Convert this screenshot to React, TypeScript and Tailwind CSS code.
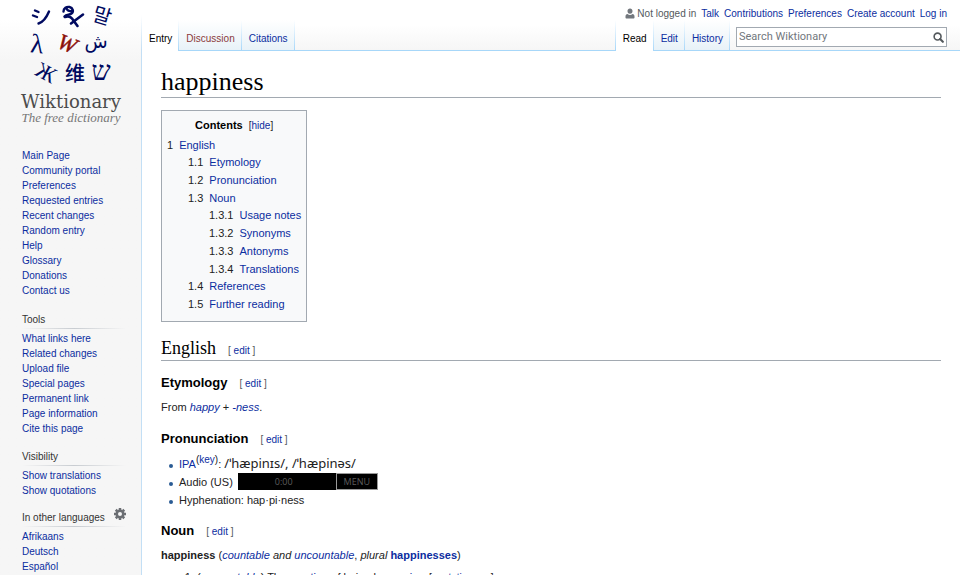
import React from "react";

const link = "text-[#0b2da0] no-underline hover:underline";

function A({ children, className = "" }: { children: React.ReactNode; className?: string }) {
  return (
    <a href="#" className={`${link} ${className}`}>
      {children}
    </a>
  );
}

function Logo() {
  const navy = "#000a60";
  return (
    <a href="#" aria-label="Wiktionary, the free dictionary" className="block pl-px text-center">
      <svg viewBox="0 0 140 93" className="block h-[93px] w-full" fill={navy} textAnchor="middle">
        <g fill="none" stroke={navy} strokeLinecap="round">
          <path d="M34 10.500l3.500 1.500M32 15.500l4 1.500" strokeWidth="2.400" />
          <path d="M37.500 23.500c5-1.500 8-6 10.500-12" strokeWidth="2.400" />
          <path d="M62.500 11.500c0-3.500 3-5 6-4.500 3.500.7 4.500 4.500 2 6.500-2 1.700-5 .5-7 3M65.500 8.500c1 2 2.500 3 5 2.500" strokeWidth="2.400" />
          <path d="M64 17c3.500-1.500 5.500-.5 7 1.500l5.500 7.500" strokeWidth="2.600" />
          <path d="M70 23.500l12-9" strokeWidth="2.600" />
        </g>
        <text transform="translate(101 16) rotate(17)" y="7" fontSize="20" className="font-['Noto_Sans_CJK_KR',sans-serif]">말</text>
        <text transform="translate(36 45) rotate(6)" y="8" fontSize="27" className="font-['Liberation_Serif',serif]">λ</text>
        <text transform="translate(66 44) rotate(22)" y="7" fontSize="22" fontStyle="italic" stroke="#8c1109" strokeWidth="0.500" fill="#8c1109" className="font-['Liberation_Serif',serif]">W</text>
        <text x="95" y="48" fontSize="19" className="font-['DejaVu_Sans',sans-serif]">ش</text>
        <text transform="translate(45 73) rotate(28)" y="7" fontSize="22" className="font-['Liberation_Serif',serif]">Ж</text>
        <text x="74" y="81" fontSize="20" fontWeight="500" className="font-['Noto_Sans_CJK_SC',sans-serif]">维</text>
        <text x="100" y="80" fontSize="27" className="font-['Liberation_Serif',serif]">ש</text>
      </svg>
      <span className="block font-['DejaVu_Serif',serif] text-[18px] leading-[18px] text-[#4c4c4c]">Wiktionary</span>
      <span className="block font-['Liberation_Serif',serif] text-[13px] italic leading-[14px] text-[#777]">The free dictionary</span>
    </a>
  );
}

function GearIcon() {
  return (
    <svg viewBox="0 0 24 24" className="h-3 w-3" fill="none" stroke="#6b6e73">
      <circle cx="12" cy="12" r="6.500" strokeWidth="5" />
      <path d="M12 0v4M12 20v4M0 12h4M20 12h4M3.500 3.500l3 3M17.500 17.500l3 3M20.500 3.500l-3 3M6.500 17.500l-3 3" strokeWidth="5" />
    </svg>
  );
}

function NavGroup({ title, items, gear = false, className = "" }: { title?: string; items: string[]; gear?: boolean; className?: string }) {
  return (
    <nav aria-label={title ?? "Navigation"} className={className}>
      {title && (
        <div className="mb-[2px] w-[104px]">
          <div className="flex h-4 items-center justify-between">
            <h3 className="text-[10px] leading-[16px] text-[#333]">{title}</h3>
            {gear && (
              <button type="button" aria-label="Language settings" className="mb-2">
                <GearIcon />
              </button>
            )}
          </div>
          <div className="h-px bg-linear-to-r from-[#f6f6f6] via-[#c8ccd1] to-[#f6f6f6]" />
        </div>
      )}
      <ul>
        {items.map((t) => (
          <li key={t} className="text-[10px] leading-[15px]">
            <A>{t}</A>
          </li>
        ))}
      </ul>
    </nav>
  );
}

function Tab({ label, active = false, missing = false }: { label: string; active?: boolean; missing?: boolean }) {
  return (
    <li className={`relative px-[7px] pt-[13px] text-[10px] leading-[12px] ${active ? "-mb-px bg-white" : "bg-linear-to-b from-white to-[#e8f2f8]"}`}>
      <a href="#" className={active ? "text-black" : missing ? "text-[#8b3a3a]" : "text-[#0b2da0]"}>
        {label}
      </a>
      <span className="absolute bottom-0 right-0 top-0 w-px bg-linear-to-b from-white to-[#a7d7f9]" />
    </li>
  );
}

function Edit() {
  return (
    <span className="ml-3 font-['Liberation_Sans',Arial,sans-serif] text-[10px] font-normal text-[#54595d]">
      [ <A>edit</A> ]
    </span>
  );
}

function H3({ children, className = "" }: { children: string; className?: string }) {
  return (
    <h3 className={`text-[13px] font-bold leading-[20px] text-black ${className}`}>
      {children}
      <Edit />
    </h3>
  );
}

function TocItem({ n, children }: { n: string; children: string }) {
  return (
    <div className="flex gap-[6px] leading-[18px]">
      <span>{n}</span>
      <A>{children}</A>
    </div>
  );
}

function Toc() {
  return (
    <nav aria-label="Contents" className="mt-3 w-fit border border-[#a2a9b1] bg-[#f8f9fa] px-[5px] pb-2 pt-[5px] text-[11px]">
      <div className="mb-px text-center leading-[18px]">
        <h2 className="inline font-bold text-black">Contents</h2>
        <span className="ml-[6px] text-[10px]">
          [<button type="button" className="text-[#0b2da0]">hide</button>]
        </span>
      </div>
      <ul>
        <li>
          <TocItem n="1">English</TocItem>
          <ul className="-mt-px ml-[21px]">
            <li><TocItem n="1.1">Etymology</TocItem></li>
            <li><TocItem n="1.2">Pronunciation</TocItem></li>
            <li>
              <TocItem n="1.3">Noun</TocItem>
              <ul className="-my-px ml-[21px]">
                <li><TocItem n="1.3.1">Usage notes</TocItem></li>
                <li><TocItem n="1.3.2">Synonyms</TocItem></li>
                <li><TocItem n="1.3.3">Antonyms</TocItem></li>
                <li><TocItem n="1.3.4">Translations</TocItem></li>
              </ul>
            </li>
            <li><TocItem n="1.4">References</TocItem></li>
            <li><TocItem n="1.5">Further reading</TocItem></li>
          </ul>
        </li>
      </ul>
    </nav>
  );
}

function Header() {
  return (
    <header className="border-b border-[#a7d7f9] bg-linear-to-b from-white from-50% to-[#f6f6f6]">
      <nav aria-label="Personal tools" className="flex h-5 justify-end gap-[5px] pr-[13px] pt-2 text-[10px] leading-[12px]">
        <span className="flex gap-[2px] text-[#54595d]">
          <svg viewBox="0 0 20 22" className="h-[11px] w-[10px]" fill="#72777d">
            <path d="M10 11.500c-3.800 0-5-2.800-5-5.500C5 3 7 1 10 1s5 2 5 5c0 2.700-1.200 5.500-5 5.500zM5 12c3 2.400 7 2.400 10 0 3 .6 4 2.500 4 5v2c0 1.500-1 2-2 2H3c-1 0-2-.5-2-2v-2c0-2.500 1-4.400 4-5z" />
          </svg>
          Not logged in
        </span>
        <A>Talk</A>
        <A>Contributions</A>
        <A>Preferences</A>
        <A>Create account</A>
        <A>Log in</A>
      </nav>
      <div className="flex h-[30px]">
        <ul className="flex">
          <Tab label="Entry" active />
          <Tab label="Discussion" missing />
          <Tab label="Citations" />
        </ul>
        <ul className="ml-auto flex">
          <li aria-hidden="true" className="w-px bg-linear-to-b from-white to-[#a7d7f9]" />
          <Tab label="Read" active />
          <Tab label="Edit" />
          <Tab label="History" />
        </ul>
        <form className="ml-[6px] mr-[13px] mt-[7px] flex h-5 w-[211px] items-center border border-[#a2a9b1] bg-white pl-[2px] pr-[2px]">
          <input
            type="search"
            aria-label="Search Wiktionary"
            placeholder="Search Wiktionary"
            className="min-w-0 flex-1 bg-transparent font-[Roboto,sans-serif] text-[11px] leading-[18px] outline-none placeholder:text-[#72777d]"
          />
          <button type="button" aria-label="Search">
            <svg viewBox="0 0 24 24" className="h-[11px] w-[11px]" fill="none" stroke="#54595d" strokeLinecap="round">
              <circle cx="10" cy="10" r="7.500" strokeWidth="3.500" />
              <path d="M15.500 15.500l6 6" strokeWidth="4.500" />
            </svg>
          </button>
        </form>
      </div>
    </header>
  );
}

function Bullet({ children }: { children: React.ReactNode }) {
  return (
    <li className="flex items-center gap-[6px] leading-[18px]">
      <span aria-hidden="true" className="ml-2 mt-[3px] h-1 w-1 rounded-full bg-[#2a5b94]" />
      <div>{children}</div>
    </li>
  );
}

export default function App() {
  return (
    <div className="flex h-screen overflow-hidden bg-white font-['Liberation_Sans',Arial,sans-serif] text-[11px] text-[#222]">
      <aside className="w-[141px] shrink-0 bg-linear-to-b from-white from-[20px] to-[#f6f6f6] to-[60px]">
        <Logo />
        <div className="pl-[22px]">
          <NavGroup
            className="pt-[23px]"
            items={["Main Page", "Community portal", "Preferences", "Requested entries", "Recent changes", "Random entry", "Help", "Glossary", "Donations", "Contact us"]}
          />
          <NavGroup
            className="mt-[14px]"
            title="Tools"
            items={["What links here", "Related changes", "Upload file", "Special pages", "Permanent link", "Page information", "Cite this page"]}
          />
          <NavGroup className="mt-[13px]" title="Visibility" items={["Show translations", "Show quotations"]} />
          <NavGroup className="mt-3" title="In other languages" gear items={["Afrikaans", "Deutsch", "Español"]} />
        </div>
      </aside>
      <div className="w-px shrink-0 bg-linear-to-b from-white from-[15px] to-[#c3dff5] to-[50px]" />
      <div className="min-w-0 flex-1">
        <Header />
        <main className="px-[19px] pt-4">
          <h1 className="border-b border-[#a2a9b1] font-['Liberation_Serif',serif] text-[26px] leading-[30px] text-black">happiness</h1>
          <Toc />
          <h2 className="mt-[17px] border-b border-[#a2a9b1] font-['Liberation_Serif',serif] text-[18px] leading-[18px] text-black">
            English
            <Edit />
          </h2>
          <H3 className="mt-3">Etymology</H3>
          <p className="mt-1 leading-[18px]">
            From <A className="italic">happy</A> + <A className="italic">-ness</A>.
          </p>
          <H3 className="mt-[13px]">Pronunciation</H3>
          <ul className="mt-[5px]">
            <Bullet>
              <A>IPA</A>
              <sup className="text-[10px] leading-[0]">(<A>key</A>)</sup>:{" "}
              <span className="font-['Noto_Sans',sans-serif] text-[13px] leading-[0]">/ˈhæpinɪs/, /ˈhæpinəs/</span>
            </Bullet>
            <Bullet>
              <div className="flex items-center gap-[5px]">
                Audio (US)
                <div className="-mt-px flex h-[17px] bg-black font-['Open_Sans',sans-serif] text-[9px] text-[#5c5c5c]">
                  <span className="w-[98px] pl-[37px]">0:00</span>
                  <button type="button" className="w-[42px] border border-[#999] leading-[15px]">MENU</button>
                </div>
              </div>
            </Bullet>
            <Bullet>Hyphenation: hap·pi·ness</Bullet>
          </ul>
          <H3 className="mt-3">Noun</H3>
          <p className="mt-1 leading-[18px]">
            <b>happiness</b> (<A className="italic">countable</A> <i>and</i> <A className="italic">uncountable</A>, <i>plural</i>{" "}
            <A className="font-bold">happinesses</A>)
          </p>
          <ol className="ml-9 mt-1 list-decimal leading-[18px]">
            <li>
              (<A className="italic">uncountable</A>) The <A>emotion</A> of being happy; <A>joy</A>.{" "}
              <span className="text-[10px]">[<A>quotations ▼</A>]</span>
            </li>
          </ol>
        </main>
      </div>
    </div>
  );
}
